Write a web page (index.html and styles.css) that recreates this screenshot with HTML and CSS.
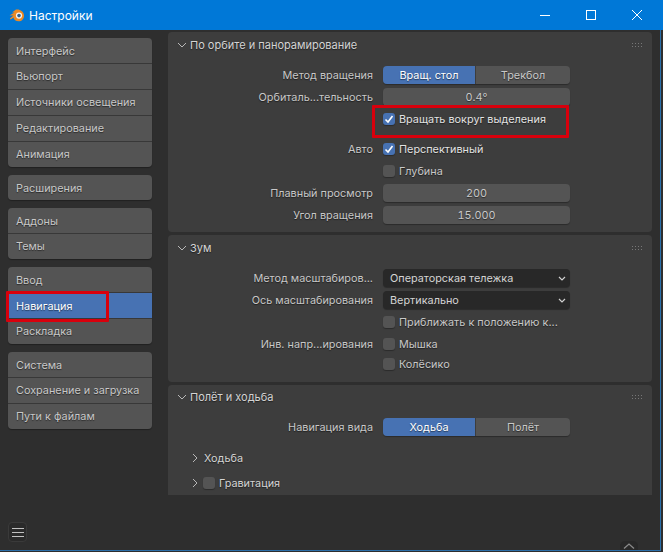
FILE: index.html
```html
<!DOCTYPE html>
<html lang="ru">
<head>
  <meta charset="UTF-8">
  <meta name="viewport" content="width=device-width, initial-scale=1.0">
  <title>Настройки</title>
  <link rel="stylesheet" href="styles.css">
</head>
<body>

  <div class="window">

    <div class="titlebar">
      <svg class="logo" width="16" height="16" viewBox="0 0 16 16">
        <path d="M0.5 8.5 L5.5 5.5 L3 5.5 L7 2.6 C11 2 14.8 4.5 15 8.5 C15.2 12 12.6 14.3 9.8 14.3 C6.8 14.3 4.8 12.5 4.5 10.5 L2 12.2 C1.2 12.6 0.6 11.8 1.2 11.2 L4.5 8.5 Z" fill="#ed8a24"/>
        <circle cx="10" cy="8.6" r="3.1" fill="#f3f3f3"/>
        <circle cx="10" cy="8.6" r="1.8" fill="#35638f"/>
      </svg>
      <span class="title">Настройки</span>
      <div class="winbtns">
        <span class="winbtn"><svg width="12" height="12" viewBox="0 0 12 12"><path d="M1 6.5H11" stroke="#fff" fill="none"/></svg></span>
        <span class="winbtn"><svg width="12" height="12" viewBox="0 0 12 12"><rect x="1.5" y="1.5" width="9" height="9" stroke="#fff" fill="none"/></svg></span>
        <span class="winbtn"><svg width="12" height="12" viewBox="0 0 12 12"><path d="M1 1L11 11M11 1L1 11" stroke="#fff" fill="none"/></svg></span>
      </div>
    </div>

    <div class="main">

      <div class="sidebar">
        <div class="tabs">
          <div class="tab">Интерфейс</div>
          <div class="tab">Вьюпорт</div>
          <div class="tab">Источники освещения</div>
          <div class="tab">Редактирование</div>
          <div class="tab">Анимация</div>
        </div>
        <div class="tabs">
          <div class="tab">Расширения</div>
        </div>
        <div class="tabs">
          <div class="tab">Аддоны</div>
          <div class="tab">Темы</div>
        </div>
        <div class="tabs">
          <div class="tab">Ввод</div>
          <div class="tab active">Навигация</div>
          <div class="tab">Раскладка</div>
        </div>
        <div class="tabs">
          <div class="tab">Система</div>
          <div class="tab">Сохранение и загрузка</div>
          <div class="tab">Пути к файлам</div>
        </div>
        <div class="menu-btn"><span></span><span></span><span></span></div>
      </div>

      <div class="content">

        <div class="panel panel-orbit">
          <div class="panel-head">
            <svg class="chev" width="10" height="6" viewBox="0 0 10 6"><path d="M1 1L5 5L9 1" stroke="#b8b8b8" fill="none"/></svg>
            <span>По орбите и панорамирование</span>
            <svg class="grip" width="10" height="4" viewBox="0 0 10 4"><path d="M0 .5h1M3 .5h1M6 .5h1M9 .5h1M0 3.5h1M3 3.5h1M6 3.5h1M9 3.5h1" stroke="#777"/></svg>
          </div>
          <div class="row">
            <label>Метод вращения</label>
            <div class="toggle"><div class="seg on">Вращ. стол</div><div class="seg">Трекбол</div></div>
          </div>
          <div class="row">
            <label>Орбиталь...тельность</label>
            <div class="field">0.4°</div>
          </div>
          <div class="row">
            <label></label>
            <div class="check-line bright"><span class="box on"><svg width="12" height="12" viewBox="0 0 12 12"><path d="M2.5 6.5L5 9L9.5 3" stroke="#fff" stroke-width="1.6" fill="none"/></svg></span>Вращать вокруг выделения</div>
          </div>
          <div class="row after-gap">
            <label>Авто</label>
            <div class="check-line bright"><span class="box on"><svg width="12" height="12" viewBox="0 0 12 12"><path d="M2.5 6.5L5 9L9.5 3" stroke="#fff" stroke-width="1.6" fill="none"/></svg></span>Перспективный</div>
          </div>
          <div class="row">
            <label></label>
            <div class="check-line"><span class="box"></span>Глубина</div>
          </div>
          <div class="row">
            <label>Плавный просмотр</label>
            <div class="field">200</div>
          </div>
          <div class="row">
            <label>Угол вращения</label>
            <div class="field">15.000</div>
          </div>
        </div>

        <div class="panel panel-zoom">
          <div class="panel-head">
            <svg class="chev" width="10" height="6" viewBox="0 0 10 6"><path d="M1 1L5 5L9 1" stroke="#b8b8b8" fill="none"/></svg>
            <span>Зум</span>
            <svg class="grip" width="10" height="4" viewBox="0 0 10 4"><path d="M0 .5h1M3 .5h1M6 .5h1M9 .5h1M0 3.5h1M3 3.5h1M6 3.5h1M9 3.5h1" stroke="#777"/></svg>
          </div>
          <div class="row">
            <label>Метод масштабиров...</label>
            <div class="select">Операторская тележка<svg width="8" height="5" viewBox="0 0 8 5"><path d="M1 1L4 4L7 1" stroke="#d0d0d0" stroke-width="1.2" fill="none"/></svg></div>
          </div>
          <div class="row">
            <label>Ось масштабирования</label>
            <div class="select">Вертикально<svg width="8" height="5" viewBox="0 0 8 5"><path d="M1 1L4 4L7 1" stroke="#d0d0d0" stroke-width="1.2" fill="none"/></svg></div>
          </div>
          <div class="row">
            <label></label>
            <div class="check-line"><span class="box"></span>Приближать к положению к...</div>
          </div>
          <div class="row">
            <label>Инв. напр...ирования</label>
            <div class="check-line"><span class="box"></span>Мышка</div>
          </div>
          <div class="row tight">
            <label></label>
            <div class="check-line"><span class="box"></span>Колёсико</div>
          </div>
        </div>

        <div class="panel panel-walk">
          <div class="panel-head">
            <svg class="chev" width="10" height="6" viewBox="0 0 10 6"><path d="M1 1L5 5L9 1" stroke="#b8b8b8" fill="none"/></svg>
            <span>Полёт и ходьба</span>
            <svg class="grip" width="10" height="4" viewBox="0 0 10 4"><path d="M0 .5h1M3 .5h1M6 .5h1M9 .5h1M0 3.5h1M3 3.5h1M6 3.5h1M9 3.5h1" stroke="#777"/></svg>
          </div>
          <div class="row">
            <label>Навигация вида</label>
            <div class="toggle"><div class="seg on">Ходьба</div><div class="seg">Полёт</div></div>
          </div>
          <div class="subhead first">
            <svg width="6" height="10" viewBox="0 0 6 10"><path d="M1 1L5 5L1 9" stroke="#b8b8b8" fill="none"/></svg>
            <span>Ходьба</span>
          </div>
          <div class="subhead">
            <svg width="6" height="10" viewBox="0 0 6 10"><path d="M1 1L5 5L1 9" stroke="#b8b8b8" fill="none"/></svg>
            <span class="box"></span>
            <span>Гравитация</span>
          </div>
        </div>

      </div>
    </div>

    <div class="mark mark-nav"></div>
    <div class="mark mark-orbit"></div>
    <div class="corner-tab"><svg width="12" height="6" viewBox="0 0 12 6"><path d="M1 5.5L6 1L11 5.5" stroke="#8a8a8a" stroke-width="1.3" fill="none"/></svg></div>
  </div>

</body>
</html>
```

FILE: styles.css
```css
* {
  box-sizing: border-box;
}

body {
  margin: 0;
  font-family: Inter, "Noto Sans", sans-serif;
  font-size: 10.85px;
  color: #c8c8c8;
  background: #2e2e2e;
}

.window {
  position: relative;
  width: 663px;
  height: 552px;
  display: flex;
  flex-direction: column;
  overflow: hidden;
}

.titlebar {
  height: 30px;
  display: flex;
  align-items: center;
  padding-left: 9px;
  background: #0078d7;
  color: #fff;
}

.logo {
  margin-bottom: 1px;
}

.title {
  margin-left: 4px;
  font-size: 12px;
}

.winbtns {
  margin-left: auto;
  display: flex;
  padding-right: 3px;
}

.winbtn {
  width: 46px;
  height: 30px;
  display: flex;
  align-items: center;
  justify-content: center;
}

.main {
  flex: 1;
  display: flex;
  margin-bottom: 1px;
  background: #2e2e2e;
  border-right: 1px solid #2a6ea8;
  border-bottom: 1px solid #2a6ea8;
  margin-right: 2px;
}

.sidebar {
  width: 160px;
  padding: 8px 0 8px 8px;
  display: flex;
  flex-direction: column;
}

.tabs {
  width: 144px;
  margin-bottom: 8px;
  border-radius: 4px;
  overflow: hidden;
  background: #545454;
  box-shadow: 0 1px 1px rgba(0,0,0,0.3);
}

.tab {
  height: 26px;
  padding-left: 8px;
  line-height: 25px;
  border-bottom: 1px solid #383838;
  text-shadow: 0 1px 1px rgba(0,0,0,0.5);
}

.tab:first-child,
.tab.active {
  line-height: 27px;
}

.tab:last-child {
  height: 25px;
  border-bottom: none;
}

.tab.active {
  background: #4772b3;
  color: #fff;
  box-shadow: 0 -1px 0 #383838;
}

.menu-btn {
  margin-top: auto;
  width: 19px;
  height: 20px;
  display: flex;
  flex-direction: column;
  align-items: center;
  justify-content: center;
  gap: 3px;
  border: 1px solid #3a3a3a;
  border-radius: 4px;
  background: #2a2a2a;
}

.menu-btn span {
  width: 12px;
  height: 1px;
  background: #c0c0c0;
}

.content {
  width: 484px;
  margin-left: 8px;
  padding-top: 2px;
}

.panel {
  margin-bottom: 3px;
  padding-bottom: 9px;
  background: #3d3d3d;
  border-radius: 4px;
}

.panel-orbit {
  height: 200px;
}

.panel-zoom {
  height: 147px;
}

.panel-walk {
  height: 110px;
  border-radius: 4px 4px 0 0;
}

.panel-head {
  height: 26px;
  padding: 0 10px 0 9px;
  display: flex;
  align-items: center;
  font-size: 11px;
  color: #d4d4d4;
  text-shadow: 0 1px 1px rgba(0,0,0,0.5);
}

.panel-walk .panel-head {
  height: 24px;
  margin-bottom: 9px;
}

.panel-orbit .panel-head,
.panel-zoom .panel-head {
  margin-bottom: 8px;
}

.chev {
  margin-right: 3px;
}

.grip {
  margin-left: auto;
}

.row {
  height: 18px;
  margin-bottom: 4px;
  display: flex;
  align-items: center;
}

.row.after-gap {
  margin-top: 12px;
}

.row.tight {
  margin-top: -2px;
}

.row label {
  width: 205px;
  margin-right: 10px;
  text-align: right;
  text-shadow: 0 1px 1px rgba(0,0,0,0.5);
}

.toggle {
  width: 187px;
  height: 18px;
  display: flex;
  border-radius: 4px;
  overflow: hidden;
  box-shadow: 0 1px 1px rgba(0,0,0,0.3);
}

.seg {
  flex: 1;
  line-height: 18px;
  text-align: center;
  background: #545454;
  text-shadow: 0 1px 1px rgba(0,0,0,0.5);
}

.seg.on {
  flex: 0 0 92px;
  margin-right: 1px;
  background: #4772b3;
  color: #fff;
}

.field {
  width: 187px;
  height: 18px;
  line-height: 18px;
  text-align: center;
  border-radius: 4px;
  background: #545454;
  font-variant-numeric: tabular-nums;
  box-shadow: 0 1px 1px rgba(0,0,0,0.3);
  text-shadow: 0 1px 1px rgba(0,0,0,0.5);
}

.select {
  width: 187px;
  height: 18px;
  padding: 0 4px 0 7px;
  display: flex;
  align-items: center;
  justify-content: space-between;
  border-radius: 4px;
  background: #282828;
  color: #d4d4d4;
  box-shadow: 0 1px 1px rgba(0,0,0,0.3);
}

.check-line {
  display: flex;
  align-items: center;
  text-shadow: 0 1px 1px rgba(0,0,0,0.5);
}

.check-line.bright {
  color: #e2e2e2;
}

.box {
  width: 12px;
  height: 12px;
  margin-right: 4px;
  flex: none;
  border-radius: 3px;
  background: #545454;
  box-shadow: 0 1px 1px rgba(0,0,0,0.3);
}

.box svg {
  display: block;
}

.box.on {
  background: #4772b3;
}

.subhead {
  height: 18px;
  padding-left: 24px;
  display: flex;
  align-items: center;
  gap: 6px;
  color: #d4d4d4;
  text-shadow: 0 1px 1px rgba(0,0,0,0.5);
}

.subhead.first {
  margin-top: 13px;
  margin-bottom: 7px;
}

.subhead .box {
  margin-left: -1px;
  margin-right: -2px;
}

/* annotation frames drawn over the screenshot */
.mark {
  position: absolute;
  border: 3px solid #d8000c;
  border-radius: 1px;
}

.mark-nav {
  left: 6px;
  top: 291px;
  width: 103px;
  height: 31px;
}

.mark-orbit {
  left: 372px;
  top: 105px;
  width: 197px;
  height: 33px;
}

.corner-tab {
  position: absolute;
  left: 620px;
  top: 541px;
  width: 18px;
  height: 9px;
  display: flex;
  justify-content: center;
  align-items: center;
  border-radius: 5px 5px 0 0;
  background: #282828;
}
```
